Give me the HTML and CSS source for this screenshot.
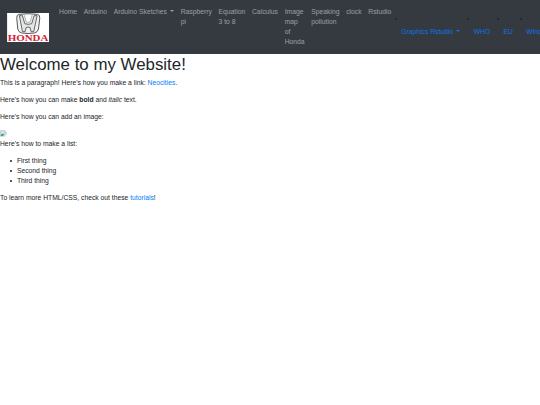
FILE: index.html
```html
<!DOCTYPE html>
<html lang="en">
<head>
<meta charset="utf-8">
<title>My Website</title>
<link rel="stylesheet" href="styles.css">
</head>
<body>
<nav class="navbar">
  <a class="brand" href="#">
    <svg class="logo" viewBox="0 0 126 87" role="img" aria-label="Honda">
      <rect width="126" height="87" fill="#fff"/>
      <path d="M36 4Q63 0 91 4Q99 5 98 16L94 48Q92 58 82 60Q63 63 44 60Q34 58 32 48L29 16Q28 5 36 4Z" fill="#f2f2f2" stroke="#55585a" stroke-width="3"/>
      <path d="M37 8H46L53 32Q63 36 74 32L81 8H90L80 56H72L69 44Q63 40 57 44L54 56H46Z" fill="#e4e4e4" stroke="#4b4e50" stroke-width="2.5"/>
      <path d="M52 7L57 27Q63 29 69 27L75 7" fill="#fff" stroke="#8b8d8f" stroke-width="2"/>
      <text class="logo-text" x="2" y="85" textLength="122" lengthAdjust="spacingAndGlyphs">HONDA</text>
    </svg>
  </a>
  <ul class="nav">
    <li><a href="#">Home</a></li>
    <li><a href="#">Arduino</a></li>
    <li><a class="toggle" href="#">Arduino Sketches</a></li>
    <li><a href="#">Raspberry<br>pi</a></li>
    <li><a href="#">Equation<br>3 to 8</a></li>
    <li><a href="#">Calculus</a></li>
    <li><a href="#">Image<br>map<br>of<br>Honda</a></li>
    <li><a href="#">Speaking<br>pollution</a></li>
    <li><a href="#">clock</a></li>
    <li><a href="#">Rstudio</a></li>
  </ul>
  <ul class="buttons">
    <li><a class="toggle" href="#">Graphics Rstudio</a></li>
    <li><a href="#">WHO</a></li>
    <li><a href="#">EU</a></li>
    <li><a href="#">Windows</a></li>
  </ul>
</nav>
<h1>Welcome to my Website!</h1>
<p>This is a paragraph! Here's how you make a link: <a href="#">Neocities</a>.</p>
<p>Here's how you can make <strong>bold</strong> and <em>italic</em> text.</p>
<p>Here's how you can add an image:</p>
<svg class="missing" viewBox="0 0 16 16" aria-hidden="true">
  <path d="M1 1H11L15 5V15H1Z" fill="#c5d9f5" stroke="#a5a9ad"/>
  <path d="M11 1V5H15" fill="#fff" stroke="#a5a9ad"/>
  <path d="M2 14V12L6 8L10 11L7 14Z" fill="#46a83c"/>
  <path d="M3 6Q3 4 5 4Q8 3 8 6Z" fill="#fff"/>
  <path d="M9 16L16 10V16Z" fill="#fff"/>
</svg>
<p>Here's how to make a list:</p>
<ul class="things">
  <li>First thing</li>
  <li>Second thing</li>
  <li>Third thing</li>
</ul>
<p>To learn more HTML/CSS, check out these <a href="#">tutorials</a>!</p>
</body>
</html>
```
FILE: styles.css
```css
* {
  box-sizing: border-box;
}

body {
  margin: 0;
  overflow: hidden;
  background: #fff;
  color: #212529;
  font: 6.75px/10.125px "Liberation Sans", Arial, sans-serif;
}

a {
  color: #007bff;
  text-decoration: none;
}

.navbar {
  display: flex;
  align-items: center;
  height: 54px;
  padding: 3.375px 6.75px;
  background: #343a40;
}

.brand {
  flex: none;
  margin-right: 6.75px;
}

.logo {
  display: block;
  width: 42.2px;
  height: 29px;
}

.logo-text {
  fill: #d32237;
  font: bold 26px "Liberation Serif", serif;
}

.nav,
.buttons {
  display: flex;
  flex: none;
  align-self: flex-start;
  margin: 0;
  padding: 0;
  list-style: none;
  white-space: nowrap;
}

.nav a {
  display: block;
  padding: 3.375px;
  color: rgba(255, 255, 255, 0.5);
}

.toggle::after {
  content: "";
  display: inline-block;
  margin-left: 3.2px;
  vertical-align: 1.72px;
  border-top: 2.025px solid;
  border-right: 2.025px solid transparent;
  border-left: 2.025px solid transparent;
}

.buttons li {
  position: relative;
  padding: 23.6px 6.7px 0;
}

.buttons li::before {
  content: "";
  position: absolute;
  top: 14.7px;
  left: 0;
  width: 2px;
  height: 2px;
  border-radius: 50%;
  background: #212529;
}

.buttons a {
  color: #0d75e2;
}

h1 {
  margin: 0;
  padding: 0.6px 0 3.1px;
  font-size: 16.875px;
  font-weight: 500;
  line-height: 20.25px;
}

p {
  margin: 0 0 6.75px;
}

.missing {
  display: block;
  width: 6.75px;
  height: 6.75px;
  margin: 8.4px 0 1.8px;
}

.things {
  margin: 0 0 6.75px;
  padding-left: 16.875px;
  list-style: none;
}

.things li::before {
  content: "";
  float: left;
  width: 2px;
  height: 2px;
  margin: 4.6px 0 0 -6.4px;
  border-radius: 50%;
  background: #212529;
}
```
